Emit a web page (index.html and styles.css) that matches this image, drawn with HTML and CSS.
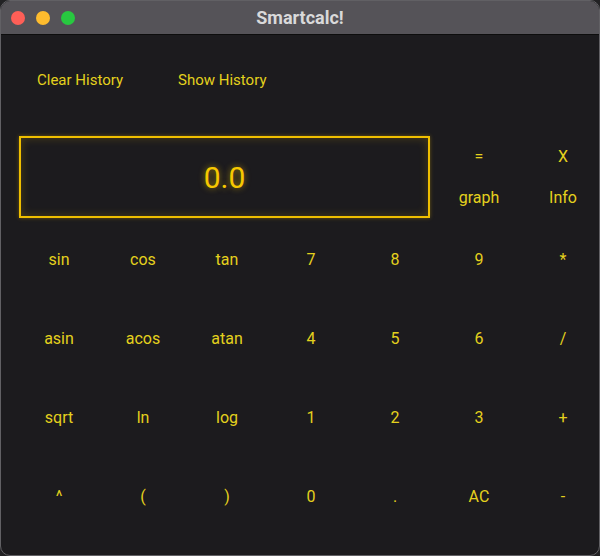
FILE: index.html
```html
<!DOCTYPE html>
<html>
<head>
<meta charset="utf-8">
<link rel="stylesheet" href="styles.css">
</head>
<body>
<div class="window">
  <div class="titlebar">
    <div class="lights">
      <span class="light red"></span>
      <span class="light yellow"></span>
      <span class="light green"></span>
    </div>
    <div class="title">Smartcalc!</div>
    <div></div>
  </div>
  <div class="history">
    <span class="btn">Clear History</span>
    <span class="btn">Show History</span>
  </div>
  <div class="top">
    <div class="display">0.0</div>
    <span class="key">=</span>
    <span class="key">X</span>
    <span class="key">graph</span>
    <span class="key">Info</span>
  </div>
  <div class="keys">
    <span class="key">sin</span><span class="key">cos</span><span class="key">tan</span><span class="key">7</span><span class="key">8</span><span class="key">9</span><span class="key">*</span>
    <span class="key">asin</span><span class="key">acos</span><span class="key">atan</span><span class="key">4</span><span class="key">5</span><span class="key">6</span><span class="key">/</span>
    <span class="key">sqrt</span><span class="key">ln</span><span class="key">log</span><span class="key">1</span><span class="key">2</span><span class="key">3</span><span class="key">+</span>
    <span class="key">^</span><span class="key">(</span><span class="key">)</span><span class="key">0</span><span class="key">.</span><span class="key">AC</span><span class="key">-</span>
  </div>
</div>
</body>
</html>
```

FILE: styles.css
```css
html, body {
  margin: 0;
  padding: 0;
  background: #222224;
  overflow: hidden;
}
.window {
  width: 600px;
  height: 556px;
  box-sizing: border-box;
  border: 1px solid #616064;
  border-radius: 10px;
  overflow: hidden;
  background: #1c1b1e;
  font-family: Roboto, "Liberation Sans", sans-serif;
  color: #e4d11d;
}
.titlebar {
  height: 33px;
  background: #555358;
  border-bottom: 1px solid #0d0d0d;
  display: grid;
  grid-template-columns: 1fr auto 1fr;
  align-items: center;
}
.lights {
  display: flex;
  gap: 11px;
  padding-left: 10px;
}
.light {
  width: 14px;
  height: 14px;
  border-radius: 50%;
}
.red { background: #fe5f57; }
.yellow { background: #febc2e; }
.green { background: #28c840; }
.title {
  color: #d9d9da;
  font-weight: bold;
  font-size: 18px;
}
.history {
  height: 90px;
  display: flex;
  align-items: center;
  padding-left: 36px;
  gap: 55px;
  font-size: 15px;
}
.top {
  margin-top: 11px;
  display: grid;
  grid-template-columns: repeat(7, 84px);
  grid-template-rows: 41px 41px;
  padding-left: 16px;
}
.display {
  grid-column: 1 / 6;
  grid-row: 1 / 3;
  margin: 0 7px 0 2px;
  border: 2px solid #efbf00;
  box-shadow: inset 0 0 10px rgba(240, 190, 0, 0.22), 0 0 4px rgba(240, 190, 0, 0.35);
  display: flex;
  align-items: center;
  justify-content: center;
  font-size: 30px;
  color: #f7c800;
  text-shadow: 0 0 6px rgba(247, 200, 0, 0.6);
}
.key {
  display: flex;
  align-items: center;
  justify-content: center;
  font-size: 16px;
}
.keys {
  margin-top: 2px;
  display: grid;
  grid-template-columns: repeat(7, 84px);
  grid-auto-rows: 79px;
  padding-left: 16px;
}
```
